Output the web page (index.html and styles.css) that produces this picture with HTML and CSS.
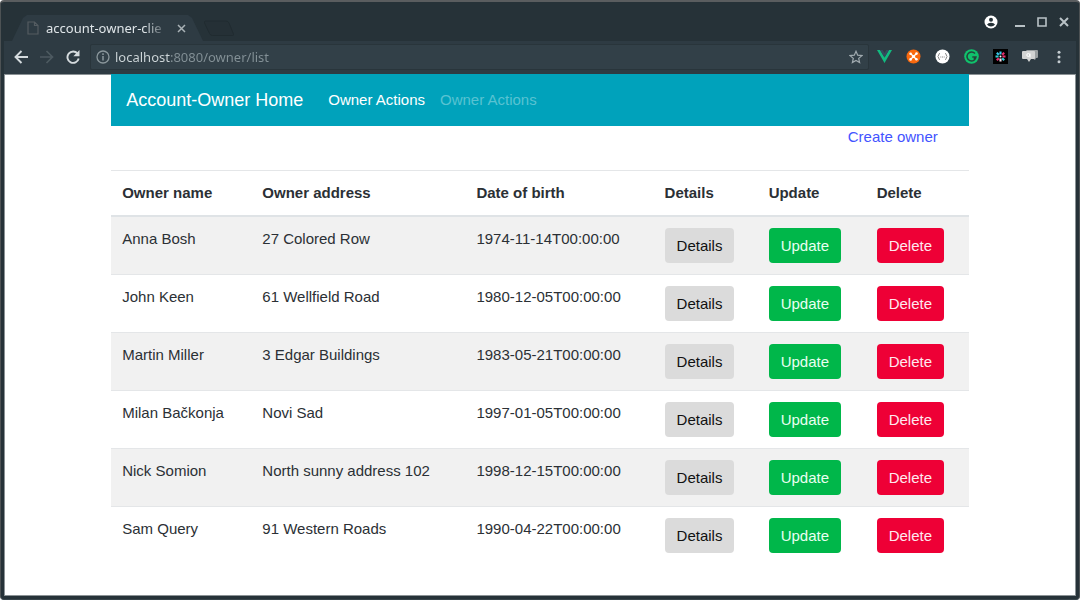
FILE: index.html
```html
<!DOCTYPE html>
<html lang="en">
<head>
<meta charset="utf-8">
<meta name="viewport" content="width=device-width, initial-scale=1">
<title>account-owner-client</title>
<link rel="stylesheet" href="styles.css">
</head>
<body>
<div class="window">
  <header class="titlebar">
    <div class="tabs">
      <div class="tab">
        <svg class="tab-icon" width="12" height="14" viewBox="0 0 12 14" fill="none" stroke="#545c61" stroke-width="1.2"><path d="M1 1h6.500l3.500 3.500V13H1zM7.500 1v3.500H11"/></svg>
        <span class="tab-title">account-owner-clie</span>
        <button class="tab-close" type="button" aria-label="Close tab"><svg width="9" height="9" viewBox="0 0 9 9" stroke="#a9b2b6" stroke-width="1.500"><path d="M1 1l7 7M8 1L1 8"/></svg></button>
      </div>
      <button class="new-tab" type="button" aria-label="New tab"><svg width="32" height="17" viewBox="0 0 32 17" fill="#253036" stroke="#202b30"><path d="M2.500 1h20.500q2 0 3 2l4.500 11q.5 1.500-1 1.500H9.500q-2 0-3-2L1.500 3q-.5-2 1-2z"/></svg></button>
    </div>
    <div class="window-controls">
      <button type="button" aria-label="Profile"><svg width="14" height="14" viewBox="0 0 14 14"><circle cx="7" cy="7" r="6.500" fill="#fff"/><circle cx="7" cy="4.800" r="2" fill="#263238"/><path d="M3 9.500q1-1.700 4-1.700t4 1.700q-1.500 2-4 2t-4-2z" fill="#263238"/></svg></button>
      <button type="button" aria-label="Minimize"><svg width="10" height="12" viewBox="0 0 10 12"><path d="M0 10h10" stroke="#b9c2c6" stroke-width="2"/></svg></button>
      <button type="button" aria-label="Maximize"><svg width="10" height="10" viewBox="0 0 10 10"><path d="M1 1h8v8H1z" fill="none" stroke="#b9c2c6" stroke-width="1.600"/></svg></button>
      <button type="button" aria-label="Close"><svg width="10" height="10" viewBox="0 0 10 10"><path d="M1 1l8 8M9 1L1 9" stroke="#b9c2c6" stroke-width="2"/></svg></button>
    </div>
  </header>

  <div class="toolbar">
    <div class="history">
      <button type="button" aria-label="Back"><svg width="14" height="14" viewBox="0 0 14 14" fill="none" stroke="#d5dbde" stroke-width="1.900"><path d="M14 7H1.800M7.500 1L1.500 7l6 6"/></svg></button>
      <button type="button" aria-label="Forward" disabled><svg width="14" height="14" viewBox="0 0 14 14" fill="none" stroke="#4d5a61" stroke-width="1.700"><path d="M0 7h12.200M6.500 1l6 6-6 6"/></svg></button>
      <button type="button" aria-label="Reload"><svg width="14" height="14" viewBox="0 0 14 14"><path d="M11.600 3.600A5.700 5.700 0 1 0 12.700 8.500" fill="none" stroke="#d5dbde" stroke-width="1.900"/><path d="M13.500 0v6.200H7.300z" fill="#d5dbde"/></svg></button>
    </div>
    <div class="address">
      <svg width="14" height="14" viewBox="0 0 14 14" fill="none" stroke="#8b979c"><circle cx="7" cy="7" r="6" stroke-width="1.300"/><path d="M7 6v4.500M7 3.300v1.600" stroke-width="1.500"/></svg>
      <input class="url" type="text" aria-label="Address" value="localhost:8080/owner/list">
      <button type="button" aria-label="Bookmark"><svg width="14" height="14" viewBox="0 0 14 14" fill="none" stroke="#a0aaaf" stroke-width="1.200"><path d="M7 1.300l1.700 3.900 4.200.4-3.200 2.800.9 4.200L7 10.400l-3.600 2.200.9-4.200L1.100 5.600l4.200-.4z"/></svg></button>
    </div>
    <div class="extensions">
      <button type="button" aria-label="Vue"><svg width="15" height="13" viewBox="0 0 15 13"><path d="M0 0h3l4.500 7.600L12 0h3L7.500 13z" fill="#12ba80"/><path d="M3 0h2.700l1.800 3.100L9.300 0H12L7.500 7.600z" fill="#35495e"/></svg></button>
      <button type="button" aria-label="Tools"><svg width="15" height="15" viewBox="0 0 15 15"><circle cx="7.500" cy="7.500" r="7" fill="#f9690e"/><path d="M5 5l5 5M10 5l-5 5" stroke="#fff" stroke-width="1.300"/><circle cx="7.500" cy="7.500" r="1.600" fill="#fff"/><circle cx="4.600" cy="4.800" r="1.300" fill="#fff"/><circle cx="10.500" cy="4.600" r="1.300" fill="#fff"/><circle cx="4.600" cy="10.400" r="1.300" fill="#fff"/><circle cx="10.400" cy="10.300" r="1.300" fill="#fff"/></svg></button>
      <button type="button" aria-label="JSON"><svg width="15" height="15" viewBox="0 0 15 15"><circle cx="7.500" cy="7.500" r="7" fill="#fff"/><path d="M5 4.500q-1.300 0-1.300 1.300 0 1.500-1 1.700 1 .2 1 1.700 0 1.300 1.300 1.300M10 4.500q1.300 0 1.300 1.300 0 1.500 1 1.700-1 .2-1 1.700 0 1.300-1.300 1.300" fill="none" stroke="#888"/><path d="M5.300 8h1M7 8h1M8.700 8h1" stroke="#888"/></svg></button>
      <button type="button" aria-label="Grammar"><svg width="15" height="15" viewBox="0 0 15 15"><circle cx="7.500" cy="7.500" r="7.300" fill="#10c26c"/><path d="M11 4.600A4.500 4.500 0 1 0 12 8H8.300M11.700 8L10 10.300" fill="none" stroke="#24453c" stroke-width="1.500"/></svg></button>
      <button type="button" aria-label="Snippets"><svg width="15" height="15" viewBox="0 0 15 15" stroke-width="2.100"><path d="M0 0h15v15H0z" fill="#000"/><path d="M7.500 2.500v3M3.800 3.800l2 2" stroke="#39c6e8"/><path d="M11.200 3.800l-2 2M12.500 7.500h-3" stroke="#e8316e"/><path d="M11.200 11.200l-2-2M2.500 7.500h3" stroke="#32cfd8"/><path d="M3.800 11.200l2-2" stroke="#ee2f74"/><path d="M7.500 12.500v-3" stroke="#f6dbe8"/><circle cx="7.500" cy="7.500" r="1" fill="#fff"/></svg></button>
      <button type="button" aria-label="Comments"><svg width="16" height="13" viewBox="0 0 16 13"><path d="M4 0h11q1 0 1 1v6q0 1-1 1h-1l-1 2-3-2z" fill="#9a9fa1"/><path d="M1 1h11q1 0 1 1v6q0 1-1 1H9l-2 3-2-3H1Q0 9 0 8V2q0-1 1-1z" fill="#d2d3d3"/><circle cx="6.300" cy="5" r="1.500" fill="none" stroke="#fff"/><path d="M8 3.500v4" stroke="#fff"/></svg></button>
      <button class="menu" type="button" aria-label="Menu"><svg width="4" height="14" viewBox="0 0 4 14" fill="#c5cdd1"><circle cx="2" cy="2.300" r="1.500"/><circle cx="2" cy="7" r="1.500"/><circle cx="2" cy="11.700" r="1.500"/></svg></button>
    </div>
  </div>

  <main class="page">
    <div class="container">
      <nav class="navbar">
        <a class="brand" href="#">Account-Owner Home</a>
        <a class="nav-link" href="#">Owner Actions</a>
        <a class="nav-link disabled" href="#" aria-disabled="true">Owner Actions</a>
      </nav>
      <div class="actions"><a href="#">Create owner</a></div>
      <table class="owners">
        <colgroup><col class="c-name"><col class="c-address"><col class="c-date"><col class="c-details"><col class="c-update"><col class="c-delete"></colgroup>
        <thead>
          <tr><th>Owner name</th><th>Owner address</th><th>Date of birth</th><th>Details</th><th>Update</th><th>Delete</th></tr>
        </thead>
        <tbody>
          <tr><td>Anna Bosh</td><td>27 Colored Row</td><td>1974-11-14T00:00:00</td><td><button class="btn" type="button">Details</button></td><td><button class="btn success" type="button">Update</button></td><td><button class="btn danger" type="button">Delete</button></td></tr>
          <tr><td>John Keen</td><td>61 Wellfield Road</td><td>1980-12-05T00:00:00</td><td><button class="btn" type="button">Details</button></td><td><button class="btn success" type="button">Update</button></td><td><button class="btn danger" type="button">Delete</button></td></tr>
          <tr><td>Martin Miller</td><td>3 Edgar Buildings</td><td>1983-05-21T00:00:00</td><td><button class="btn" type="button">Details</button></td><td><button class="btn success" type="button">Update</button></td><td><button class="btn danger" type="button">Delete</button></td></tr>
          <tr><td>Milan Bačkonja</td><td>Novi Sad</td><td>1997-01-05T00:00:00</td><td><button class="btn" type="button">Details</button></td><td><button class="btn success" type="button">Update</button></td><td><button class="btn danger" type="button">Delete</button></td></tr>
          <tr><td>Nick Somion</td><td>North sunny address 102</td><td>1998-12-15T00:00:00</td><td><button class="btn" type="button">Details</button></td><td><button class="btn success" type="button">Update</button></td><td><button class="btn danger" type="button">Delete</button></td></tr>
          <tr><td>Sam Query</td><td>91 Western Roads</td><td>1990-04-22T00:00:00</td><td><button class="btn" type="button">Details</button></td><td><button class="btn success" type="button">Update</button></td><td><button class="btn danger" type="button">Delete</button></td></tr>
        </tbody>
      </table>
    </div>
  </main>
</div>
</body>
</html>
```
FILE: styles.css
```css
* { box-sizing: border-box; }

body {
  margin: 0;
  background: #fff;
  color: #2b3035;
  font: 15px/22px "Liberation Sans", Arial, sans-serif;
}

button {
  padding: 0;
  border: 0;
  background: none;
  font: inherit;
  color: inherit;
}

svg { display: block; }

.window {
  display: flex;
  flex-direction: column;
  min-height: 100vh;
  padding: 0 3px 3px;
  border: 1px solid #4d5254;
  border-top: 2px solid #5a5d5f;
  border-bottom-color: #38444a;
  border-radius: 4px;
  background: #263238;
}

/* Title bar */
.titlebar {
  display: flex;
  justify-content: space-between;
  height: 39px;
  padding: 0 7px 0 8px;
}

.tabs {
  display: flex;
  align-items: flex-end;
}

.tab {
  display: flex;
  align-items: center;
  width: 191px;
  height: 26px;
  padding: 0 17px 0 15px;
  background: #2e3b43;
  clip-path: polygon(0 100%, 11px 3px, 15px 0, 176px 0, 180px 3px, 100% 100%);
}

.tab-icon { flex: none; }

.tab-title {
  flex: 1;
  margin: 0 8px 0 7px;
  white-space: nowrap;
  font: 13px/22px "Noto Sans", sans-serif;
  color: #dfe5e8;
  mask-image: linear-gradient(90deg, #000 98px, transparent);
}

.new-tab { padding-bottom: 4px; }

.window-controls {
  display: flex;
  align-items: center;
  gap: 12px;
}

.window-controls button:first-child { margin-right: 5px; }

/* Toolbar */
.toolbar {
  display: flex;
  align-items: center;
  height: 33px;
  padding: 0 15px 2px 10px;
  background: #2e3b43;
}

.history {
  display: flex;
  gap: 12px;
  padding-right: 10px;
}

.address {
  display: flex;
  flex: 1;
  align-items: center;
  height: 26px;
  padding: 0 5px;
  border: 1px solid #29353b;
  border-radius: 2px;
  background: #324048;
}

.url {
  flex: 1;
  min-width: 0;
  margin-left: 5px;
  padding: 0;
  border: 0;
  background: linear-gradient(90deg, #cfd7da 55px, #849197 55px);
  background-clip: text;
  color: transparent;
  font: 13px/22px "Noto Sans", sans-serif;
}

.extensions {
  display: flex;
  align-items: center;
  gap: 14px;
  padding-left: 8px;
}

.menu { margin-left: 5px; }

/* Page */
.page {
  flex: 1;
  background: #fff;
  box-shadow: inset 0 0 0 1px #8b9295;
}

.container {
  width: 80%;
  margin: 0 auto;
}

.navbar {
  display: flex;
  align-items: center;
  gap: 15px;
  height: 52px;
  padding: 0 15px;
  background: #00a2bb;
}

.navbar a {
  color: #fff;
  text-decoration: none;
}

.navbar .brand {
  margin-right: 10px;
  font-size: 18px;
}

.navbar .disabled { color: #59c2d2; }

.actions {
  padding: 0 31px 22px;
  text-align: right;
}

.actions a {
  color: #4353ff;
  text-decoration: none;
}

.owners {
  width: 100%;
  table-layout: fixed;
  border-collapse: separate;
  border-spacing: 0;
}

.c-name { width: 140px; }
.c-address { width: 214px; }
.c-date { width: 188px; }
.c-details { width: 104px; }
.c-update { width: 108px; }
.c-delete { width: 103px; }

.owners th,
.owners td {
  padding: 11px;
  text-align: left;
  vertical-align: top;
  white-space: nowrap;
}

.owners th {
  border-top: 1px solid #e4e6e8;
  border-bottom: 2px solid #dfe3e6;
}

.owners tr + tr td { border-top: 1px solid #e4e6e8; }

.owners tbody tr:nth-child(odd) { background: #f1f1f1; }

.btn {
  display: block;
  height: 35px;
  padding: 0 12px;
  border-radius: 4px;
  background: #dbdbdb;
  color: #111;
}

.btn.success {
  background: #00b74a;
  color: #e9fff1;
}

.btn.danger {
  background: #ee0036;
  color: #ffe9ee;
}
```
